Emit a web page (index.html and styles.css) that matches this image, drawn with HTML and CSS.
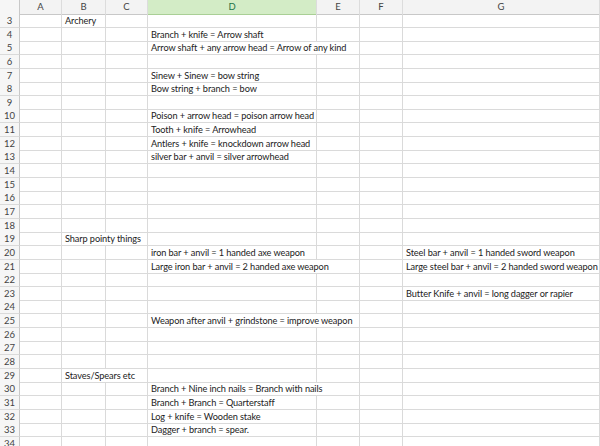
FILE: index.html
```html
<!DOCTYPE html>
<html lang="en">
  <head>
    <meta charset="utf-8">
    <link rel="stylesheet" href="styles.css">
  </head>
  <body>
    <div class="sheet">
      <div class="row head">
        <div class="rh"></div>
        <div class="ch">A</div><div class="ch">B</div><div class="ch">C</div>
        <div class="ch sel">D</div>
        <div class="ch">E</div><div class="ch">F</div><div class="ch">G</div>
      </div>

      <div class="row"><div class="rh">3</div><div class="c"></div><div class="c">Archery</div><div class="c"></div><div class="c"></div><div class="c"></div><div class="c"></div><div class="c"></div></div>
      <div class="row"><div class="rh">4</div><div class="c"></div><div class="c"></div><div class="c"></div><div class="c">Branch + knife = Arrow shaft</div><div class="c"></div><div class="c"></div><div class="c"></div></div>
      <div class="row"><div class="rh">5</div><div class="c"></div><div class="c"></div><div class="c"></div><div class="c span2">Arrow shaft + any arrow head = Arrow of any kind</div><div class="c"></div><div class="c"></div></div>
      <div class="row"><div class="rh">6</div><div class="c"></div><div class="c"></div><div class="c"></div><div class="c"></div><div class="c"></div><div class="c"></div><div class="c"></div></div>
      <div class="row"><div class="rh">7</div><div class="c"></div><div class="c"></div><div class="c"></div><div class="c">Sinew + Sinew = bow string</div><div class="c"></div><div class="c"></div><div class="c"></div></div>
      <div class="row"><div class="rh">8</div><div class="c"></div><div class="c"></div><div class="c"></div><div class="c">Bow string + branch = bow</div><div class="c"></div><div class="c"></div><div class="c"></div></div>
      <div class="row"><div class="rh">9</div><div class="c"></div><div class="c"></div><div class="c"></div><div class="c"></div><div class="c"></div><div class="c"></div><div class="c"></div></div>
      <div class="row"><div class="rh">10</div><div class="c"></div><div class="c"></div><div class="c"></div><div class="c">Poison + arrow head = poison arrow head</div><div class="c"></div><div class="c"></div><div class="c"></div></div>
      <div class="row"><div class="rh">11</div><div class="c"></div><div class="c"></div><div class="c"></div><div class="c">Tooth + knife = Arrowhead</div><div class="c"></div><div class="c"></div><div class="c"></div></div>
      <div class="row"><div class="rh">12</div><div class="c"></div><div class="c"></div><div class="c"></div><div class="c">Antlers + knife = knockdown arrow head</div><div class="c"></div><div class="c"></div><div class="c"></div></div>
      <div class="row"><div class="rh">13</div><div class="c"></div><div class="c"></div><div class="c"></div><div class="c">silver bar + anvil = silver arrowhead</div><div class="c"></div><div class="c"></div><div class="c"></div></div>
      <div class="row"><div class="rh">14</div><div class="c"></div><div class="c"></div><div class="c"></div><div class="c"></div><div class="c"></div><div class="c"></div><div class="c"></div></div>
      <div class="row"><div class="rh">15</div><div class="c"></div><div class="c"></div><div class="c"></div><div class="c"></div><div class="c"></div><div class="c"></div><div class="c"></div></div>
      <div class="row"><div class="rh">16</div><div class="c"></div><div class="c"></div><div class="c"></div><div class="c"></div><div class="c"></div><div class="c"></div><div class="c"></div></div>
      <div class="row"><div class="rh">17</div><div class="c"></div><div class="c"></div><div class="c"></div><div class="c"></div><div class="c"></div><div class="c"></div><div class="c"></div></div>
      <div class="row"><div class="rh">18</div><div class="c"></div><div class="c"></div><div class="c"></div><div class="c"></div><div class="c"></div><div class="c"></div><div class="c"></div></div>
      <div class="row"><div class="rh">19</div><div class="c"></div><div class="c span2">Sharp pointy things</div><div class="c"></div><div class="c"></div><div class="c"></div><div class="c"></div></div>
      <div class="row"><div class="rh">20</div><div class="c"></div><div class="c"></div><div class="c"></div><div class="c">iron bar + anvil = 1 handed axe weapon</div><div class="c"></div><div class="c"></div><div class="c">Steel bar + anvil = 1 handed sword weapon</div></div>
      <div class="row"><div class="rh">21</div><div class="c"></div><div class="c"></div><div class="c"></div><div class="c span2">Large iron bar + anvil = 2 handed axe weapon</div><div class="c"></div><div class="c">Large steel bar + anvil = 2 handed sword weapon</div></div>
      <div class="row"><div class="rh">22</div><div class="c"></div><div class="c"></div><div class="c"></div><div class="c"></div><div class="c"></div><div class="c"></div><div class="c"></div></div>
      <div class="row"><div class="rh">23</div><div class="c"></div><div class="c"></div><div class="c"></div><div class="c"></div><div class="c"></div><div class="c"></div><div class="c">Butter Knife + anvil = long dagger or rapier</div></div>
      <div class="row"><div class="rh">24</div><div class="c"></div><div class="c"></div><div class="c"></div><div class="c"></div><div class="c"></div><div class="c"></div><div class="c"></div></div>
      <div class="row"><div class="rh">25</div><div class="c"></div><div class="c"></div><div class="c"></div><div class="c span2">Weapon after anvil + grindstone = improve weapon</div><div class="c"></div><div class="c"></div></div>
      <div class="row"><div class="rh">26</div><div class="c"></div><div class="c"></div><div class="c"></div><div class="c"></div><div class="c"></div><div class="c"></div><div class="c"></div></div>
      <div class="row"><div class="rh">27</div><div class="c"></div><div class="c"></div><div class="c"></div><div class="c"></div><div class="c"></div><div class="c"></div><div class="c"></div></div>
      <div class="row"><div class="rh">28</div><div class="c"></div><div class="c"></div><div class="c"></div><div class="c"></div><div class="c"></div><div class="c"></div><div class="c"></div></div>
      <div class="row"><div class="rh">29</div><div class="c"></div><div class="c span2">Staves/Spears etc</div><div class="c"></div><div class="c"></div><div class="c"></div><div class="c"></div></div>
      <div class="row"><div class="rh">30</div><div class="c"></div><div class="c"></div><div class="c"></div><div class="c span2">Branch + Nine inch nails = Branch with nails</div><div class="c"></div><div class="c"></div></div>
      <div class="row"><div class="rh">31</div><div class="c"></div><div class="c"></div><div class="c"></div><div class="c">Branch + Branch = Quarterstaff</div><div class="c"></div><div class="c"></div><div class="c"></div></div>
      <div class="row"><div class="rh">32</div><div class="c"></div><div class="c"></div><div class="c"></div><div class="c">Log + knife = Wooden stake</div><div class="c"></div><div class="c"></div><div class="c"></div></div>
      <div class="row"><div class="rh">33</div><div class="c"></div><div class="c"></div><div class="c"></div><div class="c">Dagger + branch = spear.</div><div class="c"></div><div class="c"></div><div class="c"></div></div>
      <div class="row"><div class="rh">34</div><div class="c"></div><div class="c"></div><div class="c"></div><div class="c"></div><div class="c"></div><div class="c"></div><div class="c"></div></div>
    </div>
  </body>
</html>
```

FILE: styles.css
```css
body {
  margin: 0;
  background: #fff;
  font-family: Lato, "Open Sans", sans-serif;
  font-size: 9.2px;
  letter-spacing: -0.1px;
  color: #222;
}

.sheet {
  width: 600px;
  height: 446px;
  overflow: hidden;
}

.row {
  display: grid;
  grid-template-columns: 20px 42px 44px 42px 169px 43px 43px 197px;
  height: 13.65px;
}

.row > div {
  box-sizing: border-box;
  border-right: 1px solid #dadada;
  border-bottom: 1px solid #dadada;
  white-space: nowrap;
}

.c {
  padding-left: 3px;
  line-height: 13px;
}

.span2 {
  grid-column: span 2;
}

/* header strip */
.head {
  height: 14px;
  background: #f3f3f3;
}

.head > div {
  border-bottom-color: #c8c8c8;
  border-right-color: #dcdcdc;
}

.ch {
  text-align: center;
  line-height: 14px;
  color: #444;
  font-size: 9.5px;
  letter-spacing: 0;
}

.ch.sel {
  background: #d3ecc6;
  color: #217346;
  border-bottom-color: #a9cf95;
}

.rh {
  background: #f6f6f6;
  border-right-color: #c8c8c8 !important;
  text-align: center;
  line-height: 13px;
  color: #444;
  font-size: 9.5px;
  letter-spacing: 0;
}
```
